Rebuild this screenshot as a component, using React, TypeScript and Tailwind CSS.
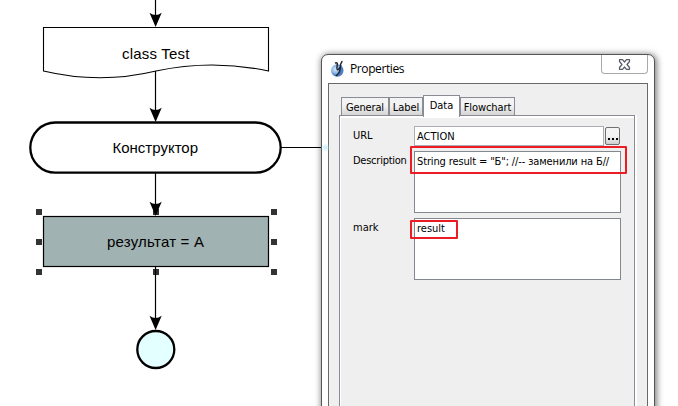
import React from "react";

function Arrow({ from, to }: { from: number; to: number }) {
  return (
    <g>
      <path d={`M155.5 ${from}V${to - 8}`} stroke="#000" strokeWidth="1.2" />
      <path d={`M155.6 ${to}l-6.1 -14.2q6.1 4.4 12.2 0z`} fill="#000" />
    </g>
  );
}

const handles = [
  [36, 209], [153, 209], [271, 209],
  [36, 239], [271, 239],
  [36, 269], [153, 269], [271, 269],
];

function Diagram() {
  return (
    <svg className="block" width="678" height="406" fill="none" fontFamily="'Liberation Sans', Arial, sans-serif" fontSize="15">
      <path d="M43.5 71V27.5H268.5V71Q212 59 156 71Q100 84.500 43.5 71z" fill="#fff" stroke="#000" strokeWidth="1.100" />
      <rect x="30.300" y="122.500" width="250.400" height="50.200" rx="25.100" fill="#fff" stroke="#000" strokeWidth="2.300" />
      <path d="M281 147.500H322" stroke="#000" strokeWidth="1.200" />
      <rect x="43.500" y="216.500" width="225" height="50" fill="#a0b2b2" stroke="#000" strokeWidth="1.200" />
      {handles.map(([x, y]) => (
        <rect key={`${x}-${y}`} x={x} y={y} width="6" height="6" fill="#333" />
      ))}
      <Arrow from={0} to={27} />
      <Arrow from={71} to={122} />
      <Arrow from={173} to={216} />
      <Arrow from={267} to={330} />
      <circle cx="155.800" cy="349.500" r="18.500" fill="#e4ffff" stroke="#000" strokeWidth="2.300" />
      <g fill="#000">
        <text x="122" y="59" textLength="67.500">class Test</text>
        <text x="112.500" y="153" textLength="85.500">Конструктор</text>
        <text x="107" y="247" textLength="97">результат = A</text>
      </g>
    </svg>
  );
}

function TitleBar() {
  return (
    <div className="flex h-7 items-start">
      <svg className="ml-[8px] mt-[5px] shrink-0" width="16" height="18" viewBox="0 0 16 18">
        <defs>
          <radialGradient id="globe" cx="0.35" cy="0.4">
            <stop offset="0" stopColor="#d8ebfc" />
            <stop offset="0.6" stopColor="#8fb8e8" />
            <stop offset="1" stopColor="#4d7cc4" />
          </radialGradient>
        </defs>
        <circle cx="7.300" cy="10.500" r="6.200" fill="url(#globe)" />
        <path d="M5.500 3Q7.800 2 7.300 5Q6.300 9.500 7.600 9.800Q9.200 9.500 10.800 5.500M12 1.500Q10 4 10.300 8Q10 13 6.300 15.600" fill="none" stroke="#20242c" strokeWidth="1.400" strokeLinecap="round" />
      </svg>
      <span className="ml-[4px] mt-[5px] font-['Open_Sans','Noto_Sans',sans-serif] text-[12px] leading-[18px] tracking-[-0.400px]">Properties</span>
      <div className="ml-auto mr-[6px] flex h-[19px] w-[47px] items-center justify-center rounded-b-[4px] border border-t-0 border-[#a9a9a9]">
        <svg width="13" height="11" viewBox="0 0 13 11">
          <path d="M1.500 .7H4.500L6.500 3L8.500 .7H11.500V2.500L9 5.500L11.500 8.500V10.300H8.500L6.500 8L4.500 10.300H1.500V8.500L4 5.500L1.500 2.500z" fill="#fff" stroke="#565968" strokeWidth="1.200" strokeLinejoin="round" />
        </svg>
      </div>
    </div>
  );
}

const tabText = "block text-center whitespace-nowrap";

function Tabs() {
  const idle = "h-[18px] border border-b-0 border-[#898c95] bg-linear-to-b from-[#f3f3f3] from-45% to-[#d4d4d4] leading-[19px]";
  return (
    <div className="relative z-10 ml-[2px] flex h-[20px] items-end">
      <div className={`${idle} w-[48px]`}><span className={`${tabText} tracking-[-0.150px]`}>General</span></div>
      <div className={`${idle} w-[34px]`}><span className={tabText}>Label</span></div>
      <div className="-mb-[2px] h-[22px] w-[37px] border border-b-0 border-[#898c95] bg-white leading-[19px]"><span className={tabText}>Data</span></div>
      <div className={`${idle} w-[55px]`}><span className={`${tabText} tracking-[-0.100px]`}>Flowchart</span></div>
    </div>
  );
}

function Form() {
  return (
    <div className="grid grid-cols-[61px_207px] pl-[12px] pt-[8px] leading-[14px]">
      <span className="pt-[3px]">URL</span>
      <div className="flex h-[25px] items-start gap-[1px]">
        <div className="h-[20px] w-[190px] border border-[#abadb3] bg-white pl-[2px] pt-[3px]">ACTION</div>
        <button className="mt-[1px] flex h-[18px] w-[15px] items-end justify-center gap-[2px] rounded-[2px] border border-[#707070] bg-linear-to-b from-[#f4f4f4] from-50% to-[#cfcfcf] pb-[4px]">
          <i className="size-[2px] bg-black" /><i className="size-[2px] bg-black" /><i className="size-[2px] bg-black" />
        </button>
      </div>
      <span className="pt-[3px] tracking-[-0.250px] whitespace-nowrap">Description</span>
      <div className="relative mb-[5px] h-[62px] border border-[#828790] bg-white pl-[2px] pt-[3px] tracking-[-0.130px] whitespace-nowrap">
        String result = "Б"; //-- заменили на Б//
        <div className="absolute -left-[5px] -top-[6px] h-[28px] w-[217px] rounded-[1px] border-2 border-[#ed1c24]" />
      </div>
      <span className="pt-[3px]">mark</span>
      <div className="relative h-[62px] border border-[#828790] bg-white pl-[2px] pt-[3px]">
        result
        <div className="absolute -left-[5px] top-[1px] h-[19px] w-[48px] rounded-[1px] border-2 border-[#ed1c24]" />
      </div>
    </div>
  );
}

function PropertiesWindow() {
  return (
    <section className="absolute left-[321px] top-[54px] h-[370px] w-[334px] rounded-t-[7px] border border-[#555] bg-white text-black shadow-[1px_1px_6px_1px_rgba(0,0,0,0.5)]">
      <TitleBar />
      <div className="mx-[6px] h-[340px] border border-[#696969] bg-[#efefef] pl-[10px] pt-[11px] font-['DejaVu_Sans_Condensed','DejaVu_Sans',sans-serif] text-[11px]">
        <Tabs />
        <div className="h-[310px] w-[298px] border-r-2 border-white">
          <div className="h-full border border-[#898c95]">
            <div className="h-full border-l border-t-2 border-white">
              <Form />
            </div>
          </div>
        </div>
      </div>
      <div className="absolute left-px top-[90px] size-[5px] rounded-full bg-[#c5effb] blur-[1px]" />
    </section>
  );
}

export default function App() {
  return (
    <main className="relative h-[406px] w-[678px] overflow-hidden bg-white">
      <Diagram />
      <PropertiesWindow />
    </main>
  );
}
